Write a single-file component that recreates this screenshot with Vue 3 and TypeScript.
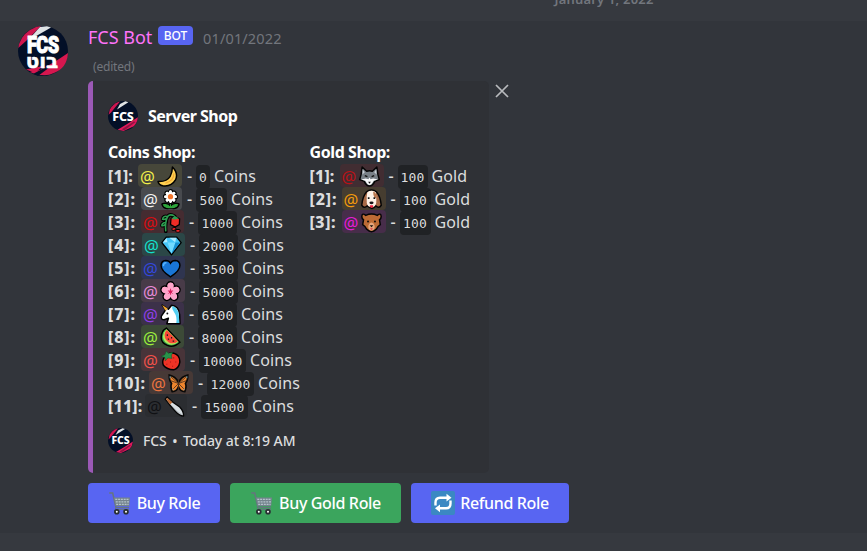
<script setup lang="ts">
interface ShopRow {
  n: number
  emoji: string
  color: string
  bg: string
  price: string
  labelW: number
  mentionW: number
  codeW: number
}

const coins: ShopRow[] = [
  { n: 1, emoji: 'moon', color: '#f1ee4b', bg: '#47473a', price: '0', labelW: 30, mentionW: 44, codeW: 14 },
  { n: 2, emoji: 'flower', color: '#f2f2f2', bg: '#484a4e', price: '500', labelW: 33, mentionW: 41, codeW: 31 },
  { n: 3, emoji: 'rose', color: '#d80d12', bg: '#452c31', price: '1000', labelW: 33, mentionW: 43, codeW: 39 },
  { n: 4, emoji: 'gem', color: '#14e0cd', bg: '#2b4747', price: '2000', labelW: 34, mentionW: 43, codeW: 39 },
  { n: 5, emoji: 'heart', color: '#3448dc', bg: '#2f3550', price: '3500', labelW: 33, mentionW: 44, codeW: 39 },
  { n: 6, emoji: 'blossom', color: '#e58ad8', bg: '#483b48', price: '5000', labelW: 33, mentionW: 44, codeW: 39 },
  { n: 7, emoji: 'unicorn', color: '#8f3fe8', bg: '#3c3149', price: '6500', labelW: 33, mentionW: 43, codeW: 39 },
  { n: 8, emoji: 'melon', color: '#9cef3e', bg: '#3c4a37', price: '8000', labelW: 33, mentionW: 43, codeW: 39 },
  { n: 9, emoji: 'berry', color: '#f0524b', bg: '#483439', price: '10000', labelW: 33, mentionW: 44, codeW: 47 },
  { n: 10, emoji: 'butterfly', color: '#ea7440', bg: '#473936', price: '12000', labelW: 41, mentionW: 44, codeW: 47 },
  { n: 11, emoji: 'knife', color: '#101114', bg: '#2b2d31', price: '15000', labelW: 37, mentionW: 42, codeW: 47 },
]
const gold: ShopRow[] = [
  { n: 1, emoji: 'wolf', color: '#ba1217', bg: '#412d32', price: '100', labelW: 30, mentionW: 44, codeW: 30 },
  { n: 2, emoji: 'dog', color: '#f39b0c', bg: '#463d30', price: '100', labelW: 32, mentionW: 44, codeW: 31 },
  { n: 3, emoji: 'bear', color: '#e61cd6', bg: '#472d4a', price: '100', labelW: 32, mentionW: 44, codeW: 31 },
]
const fields = [
  { id: 'coins', title: 'Coins Shop:', unit: 'Coins', rows: coins },
  { id: 'gold', title: 'Gold Shop:', unit: 'Gold', rows: gold },
]
const petals = [0, 45, 90, 135, 180, 225, 270, 315]
const blossomPetals = [0, 72, 144, 216, 288]
</script>

<template>
  <div class="chat">
    <svg class="defs" width="0" height="0" aria-hidden="true">
      <symbol id="crest" viewBox="0 0 50 50">
        <circle cx="25" cy="25" r="25" fill="#030f27" />
        <path d="M1 18 Q5 6 18 1 L23 0 L8 15 L.3 22Z" fill="#cf164f" />
        <path d="M22 1 L29 .3 L33 1.5 L20 9 L12 12Z" fill="#dfe3e5" />
        <path d="M50 27 Q49 42 36 47 Q26 52 12 46 L22 44 L38 35Z" fill="#d6174f" />
        <path d="M8 43.5 L25 40 L17 47Z" fill="#d6174f" />
        <path d="M15 48 L28 41 L32 41 L20 50Z" fill="#071329" />
      </symbol>
      <symbol id="crest-small" viewBox="0 0 50 50">
        <circle cx="25" cy="25" r="25" fill="#030f27" />
        <path d="M3 14 Q8 5 17 1.5 L20 1 L5 19 L1 23Z" fill="#cf164f" />
        <path d="M20 5 L29 .3 L34 2 L15 14Z" fill="#dfe3e5" />
        <path d="M49.8 27 Q49 36 43 42 L26 50 L16 48 L36 36Z" fill="#e0185a" />
        <path d="M23 47 L43 34 L46 35 L27 49Z" fill="#8d1541" />
      </symbol>
      <symbol id="cart" viewBox="0 0 24 24">
        <path d="M1.2 2 H4.7 L8 16.4 H21" fill="none" stroke="#66757f" stroke-width="1.5" />
        <path d="M5.8 6.4 H22 L21.2 15 H7.5Z" fill="#74838d" />
        <path d="M7.3 8.3 H21.3 M7.8 10.8 H21 M8.2 13.3 H20.6" stroke="#b4c3cb" stroke-width="1.3" stroke-dasharray="2 .8" />
        <path d="M8 16.4 Q6.6 18.4 8.4 18.4 H21" fill="none" stroke="#66757f" />
        <circle cx="8.8" cy="20.7" r="1.9" fill="#fff" stroke="#292f33" stroke-width="1.8" />
        <circle cx="18" cy="20.7" r="1.9" fill="#fff" stroke="#292f33" stroke-width="1.8" />
      </symbol>
      <symbol id="repeat" viewBox="0 0 24 24">
        <rect width="24" height="24" rx="2" fill="#3b88c3" />
        <path d="M4.5 14.5 V11.5 Q4.5 6.7 9 6.7 H17 M19.5 9.5 V12.5 Q19.5 17.3 15 17.3 H8" fill="none" stroke="#fff" stroke-width="2.4" />
        <path d="M15.5 2.8 L20.5 6.7 L15.5 10.6Z M9 13.4 L4 17.3 L9 21.2Z" fill="#fff" />
      </symbol>
      <symbol id="moon" viewBox="0 0 20 20">
        <path d="M14.7 1 Q20.6 7 17.6 13.2 Q13.5 20 5.5 18.8 Q1.6 18 1 14.8 Q9.5 15.2 12.5 10 Q14.6 6.4 14.7 1Z" fill="#ffd052" stroke="#000" stroke-width="1.4" stroke-linejoin="round" />
        <path d="M16 7 Q16.6 13.5 8 16.5" fill="none" stroke="#f0a832" stroke-width="1.1" />
      </symbol>
      <symbol id="flower" viewBox="0 0 20 20">
        <path d="M10 12 V18 M10 17.6 Q4 19 2.5 14.5 Q7 13 10 17.6 Q13 13 17.5 14.5 Q16 19 10 17.6" fill="#2ea63d" stroke="#000" stroke-width="2.6" stroke-linejoin="round" />
        <path d="M10 12 V18 M10 17.6 Q5 18.3 3.3 15 Q7 14 10 17.6 Q13 14 16.7 15 Q15 18.3 10 17.6" fill="#2ea63d" stroke="#2ea63d" />
        <ellipse v-for="a in petals" :key="a" cx="10" cy="3.3" rx="2.1" ry="2.6" fill="#fff" stroke="#000" stroke-width="1.2" :transform="`rotate(${a} 10 7.3)`" />
        <ellipse v-for="a in petals" :key="`inner${a}`" cx="10" cy="3.8" rx="1.6" ry="2.6" fill="#fff" :transform="`rotate(${a} 10 7.3)`" />
        <circle cx="10" cy="7.3" r="2.5" fill="#f4762c" />
      </symbol>
      <symbol id="rose" viewBox="0 0 20 20">
        <path d="M5.5 18.5 Q4.6 9 7.5 4 Q9.5 1.5 14 4 M6 9.5 Q1.5 10.5 1.8 13 Q4 13.5 5.6 11 M7.5 4.5 Q3 3 2.5 7 Q5 7.5 7.5 5" fill="none" stroke="#000" stroke-width="3.4" stroke-linejoin="round" stroke-linecap="round" />
        <path d="M5.5 18.5 Q4.6 9 7.5 4 Q9.5 1.5 14 4 M6 9.5 Q1.5 10.5 1.8 13 Q4 13.5 5.6 11 M7.5 4.5 Q3 3 2.5 7 Q5 7.5 7.5 5" fill="none" stroke="#2d9c50" stroke-width="1.5" />
        <path d="M10.5 6 L14 4 L18.7 6.5 L18.4 12 L14.5 14.3 L10 12Z" fill="#f02c26" stroke="#000" stroke-width="1.2" />
        <path d="M11 6.4 L14 3.5 L18 6.2 L14 7.2Z" fill="#2d9c50" />
        <path d="M12.5 16.3 L14 16 M16.2 17.9 H18" stroke="#000" stroke-width="3.2" stroke-linecap="round" />
        <path d="M12.5 16.3 L14 16 M16.2 17.9 H18" stroke="#e8262a" stroke-width="1.6" stroke-linecap="round" />
      </symbol>
      <symbol id="gem" viewBox="0 0 20 20">
        <path d="M5 2 H15 L19.2 7.2 L10 18.8 L.8 7.2Z" fill="#43c5f6" stroke="#000" stroke-width="1.3" stroke-linejoin="round" />
        <path d="M5.3 2.8 L6.2 7 L1.8 7.1Z M8 2.7 H14.6 L13.5 7Z" fill="#abeafe" />
        <path d="M6.2 7.2 H13.8 L10 18Z" fill="#71dbff" />
        <path d="M13.8 7.2 H18.2 L10 18Z" fill="#168fd0" />
      </symbol>
      <symbol id="heart" viewBox="0 0 20 20">
        <path d="M10 18 Q1 12.5 1 7 Q1.2 2.5 5.4 2.3 Q8.5 2.3 10 5 Q11.5 2.3 14.6 2.3 Q18.8 2.5 19 7 Q19 12.5 10 18Z" fill="#1976d6" stroke="#000" stroke-width="1.4" />
        <path d="M3.3 7 Q3.5 4.7 5.6 4.5" fill="none" stroke="#58b5ff" stroke-width="1.5" stroke-linecap="round" />
      </symbol>
      <symbol id="blossom" viewBox="0 0 20 20">
        <ellipse v-for="a in blossomPetals" :key="a" cx="10" cy="4.8" rx="3.7" ry="4" fill="#ffa8cb" stroke="#000" stroke-width="1.4" :transform="`rotate(${a} 10 10.2)`" />
        <ellipse v-for="a in blossomPetals" :key="`inner${a}`" cx="10" cy="5.5" rx="3" ry="3.9" fill="#ffa5ca" :transform="`rotate(${a} 10 10.2)`" />
        <path d="M10 7.4 V13 M7.6 9.2 L12.4 11.8 M12.4 9.2 L7.6 11.8" stroke="#e52768" />
        <circle cx="10" cy="10.3" r="1.5" fill="#d91856" />
      </symbol>
      <symbol id="unicorn" viewBox="0 0 20 20">
        <path d="M2 1 L8 5 L11 1.2 Q18 2 18.7 10 L19 18.8 H6.5 L8 13.5 L4 15 Q.6 15 1.3 11.5 L5.4 5.5Z" fill="#fff" stroke="#000" stroke-width="1.4" stroke-linejoin="round" />
        <path d="M2 1 L7.3 4.4 L5.3 6.4Z" fill="#f8aa2e" />
        <path d="M11.5 2 Q17.2 3 18 11 L18.4 18 H15.5 Q16.5 12 13.6 8 Q11 5 11.5 2Z" fill="#54cff2" />
        <circle cx="7" cy="9" r=".9" fill="#111" />
      </symbol>
      <symbol id="melon" viewBox="0 0 20 20">
        <path d="M6 1 L19 14.5 Q13 20 7 17.5 Q-1.2 14 2 5.5 Q3 2.5 6 1Z" fill="#35a849" stroke="#000" stroke-width="1.4" stroke-linejoin="round" />
        <path d="M6.2 2.2 L17.6 14 Q12.5 18.5 7.5 16 Q.7 12.4 3.8 5Z" fill="#b8e45c" />
        <path d="M6.5 2.8 L17 13.7 Q12.8 16.8 8.5 14.7 Q2.7 11 5 4.8Z" fill="#fa4838" />
        <path d="M7 7 V8.5 M7.5 11 L8.5 12 M11 9.5 V11 M12 13.5 H13.5" stroke="#1b1b1b" stroke-width="1.1" />
      </symbol>
      <symbol id="berry" viewBox="0 0 20 20">
        <path d="M3.5 8 Q7 2.5 13 3 Q19.4 5 18.8 12 Q17.8 17.5 13 18.9 Q6.5 18.5 3.2 14.5 Q1.8 11 3.5 8Z" fill="#ef3326" stroke="#000" stroke-width="1.4" />
        <path d="M1 6 L4.5 4.6 L6 1.2 L8 3 L12 2.2 L10.8 5.6 L11.5 8 L7.5 7.6 L5 10.3 L4.6 7.2Z" fill="#28924a" stroke="#0b4b24" stroke-width=".4" />
        <path d="M13 7 V8 M10 11 V12 M15 11 V12 M6.5 13 V14 M12 15 V16" stroke="#ad1515" />
      </symbol>
      <symbol id="butterfly" viewBox="0 0 20 20">
        <path d="M10 9 Q7 3 1.2 2 Q1 7 3.4 10 Q2 13 4 17.7 Q8.5 17.5 10 13 Q11.5 17.5 16 17.7 Q18 13 16.6 10 Q19 7 18.8 2 Q13 3 10 9Z" fill="#ee852d" stroke="#090909" stroke-width="1.6" />
        <path d="M10 6 V16 M10 10 L3 4 M10 10 L2.8 7.4 M10 10 L5 15 M10 10 L17 4 M10 10 L17.2 7.4 M10 10 L15 15" stroke="#48301f" stroke-width=".8" />
        <path d="M2 3 V5 M18 3 V5 M4.5 15 L5 16.4 M15.5 15 L15 16.4" stroke="#72b9d5" stroke-width=".8" />
      </symbol>
      <symbol id="knife" viewBox="0 0 20 20">
        <path d="M3 .9 L8.5 6 L15 10.5 Q19 15 18.6 19 Q15 19 11 14.7 L5.5 8.5 L1.2 3Z" fill="#d8dee2" stroke="#050505" stroke-width="1.3" stroke-linejoin="round" />
        <path d="M3 1.6 L8 6 L5.8 8 L2 3Z" fill="#b66735" />
        <path d="M7.3 9.2 Q12 15.5 17.5 18" stroke="#aab3b9" stroke-width=".7" fill="none" />
      </symbol>
      <symbol id="wolf" viewBox="0 0 20 20">
        <path d="M3 1 L7.3 5 Q10 4.2 12.7 5 L17 1 L18 8 L19.3 13 L15 14.6 Q13 19 10 19 Q7 19 5 14.6 L.7 13 L2 8Z" fill="#788087" stroke="#050505" stroke-width="1.4" stroke-linejoin="round" />
        <path d="M3.5 3 L5.5 6 L3.3 8Z M16.5 3 L14.5 6 L16.7 8Z" fill="#c7ced4" />
        <path d="M2 12.8 L6.5 12 L9 12.5 L10 11 L11 12.5 L13.5 12 L18 12.8 L14 14 Q12 18 10 18 Q8 18 6 14Z" fill="#f8f9fa" />
        <path d="M5.5 9.2 L8 10.2 M14.5 9.2 L12 10.2" stroke="#111" stroke-width="1.3" />
        <path d="M8.7 15 H11.3 L10 16.8Z" fill="#111" />
      </symbol>
      <symbol id="dog" viewBox="0 0 20 20">
        <path d="M5 3 Q10 -1 15 3 Q18.5 7 19.3 15.5 Q17 19 14 16 Q11 21 6 16 Q3 19 .7 15.5 Q1.5 7 5 3Z" fill="#a66946" stroke="#050505" stroke-width="1.4" />
        <path d="M6 3 Q10 .5 14 3 Q15 7 14.5 13 Q14 17 10 17 Q6 17 5.5 13 Q5 7 6 3Z" fill="#fff3e8" />
        <path d="M11.5 2.3 Q15 3 15 9 Q11.8 9 11.5 2.3Z" fill="#bb7950" />
        <path d="M7.3 7.8 V9.5 M12.7 7.8 V9.5" stroke="#111" stroke-width="1.6" />
        <ellipse cx="10" cy="13.2" rx="2" ry="1.3" fill="#171315" />
        <path d="M8.5 15.5 H11.5 V17 Q10 19 8.5 17Z" fill="#ed2443" />
      </symbol>
      <symbol id="bear" viewBox="0 0 20 20">
        <path d="M4.5 3.2 Q1 .5 .8 4 Q.6 6 2.4 7.5 L1.6 12 Q4 13.5 5.5 16.5 Q10 21 14.5 16.5 Q16 13.5 18.4 12 L17.6 7.5 Q19.4 6 19.2 4 Q19 .5 15.5 3.2 Q10 .7 4.5 3.2Z" fill="#bd6b35" stroke="#050505" stroke-width="1.4" />
        <path d="M7 13 Q8 10 10 10 Q12 10 13 13 Q13.5 17.5 10 17.5 Q6.5 17.5 7 13Z" fill="#e7a77d" />
        <circle cx="6.7" cy="9" r="1" fill="#16100d" />
        <circle cx="13.3" cy="9" r="1" fill="#16100d" />
        <path d="M8.3 12.5 H11.7 L10 14.5Z" fill="#16100d" />
        <path d="M8.5 16 Q10 15 11.5 16 L10 17Z" fill="#de2941" />
      </symbol>
    </svg>

    <div class="divider"><span>January 1, 2022</span></div>

    <article class="message">
      <div class="avatar">
        <svg viewBox="0 0 50 50"><use href="#crest" /></svg>
        <span class="avatar-top">FCS</span>
        <span class="avatar-bottom">בוט</span>
      </div>
      <div class="body">
        <header class="head">
          <span class="name">FCS Bot</span>
          <span class="tag">BOT</span>
          <time>01/01/2022</time>
        </header>
        <div class="edited">(edited)</div>

        <div class="embed-line">
          <section class="embed">
            <div class="author">
              <div class="logo">
                <svg viewBox="0 0 50 50"><use href="#crest-small" /></svg>
                <span>FCS</span>
              </div>
              <strong>Server Shop</strong>
            </div>
            <div class="fields">
              <div v-for="f in fields" :key="f.id" :class="['field', f.id]">
                <h3>{{ f.title }}</h3>
                <div v-for="r in f.rows" :key="r.n" class="row">
                  <b :style="{ width: r.labelW + 'px' }">[{{ r.n }}]:</b>
                  <span class="mention" :style="{ color: r.color, background: r.bg, width: r.mentionW + 'px' }">
                    <i>@</i>
                    <svg viewBox="0 0 20 20"><use :href="'#' + r.emoji" /></svg>
                  </span>
                  <span class="dash">-</span>
                  <code :style="{ width: r.codeW + 'px' }">{{ r.price }}</code>
                  <span class="unit">{{ f.unit }}</span>
                </div>
              </div>
            </div>
            <footer>
              <div class="logo small">
                <svg viewBox="0 0 50 50"><use href="#crest-small" /></svg>
                <span>FCS</span>
              </div>
              <span class="foot">FCS <em>•</em> Today at 8:19 AM</span>
            </footer>
          </section>
          <svg class="close" viewBox="0 0 14 14"><path d="M1 1 L13 13 M13 1 L1 13" /></svg>
        </div>

        <div class="buttons">
          <button class="buy"><svg viewBox="0 0 24 24"><use href="#cart" /></svg><span>Buy Role</span></button>
          <button class="gold-buy"><svg viewBox="0 0 24 24"><use href="#cart" /></svg><span>Buy Gold Role</span></button>
          <button class="refund"><svg viewBox="0 0 24 24"><use href="#repeat" /></svg><span>Refund Role</span></button>
        </div>
      </div>
    </article>
  </div>
</template>

<style>
body {
  margin: 0;
  background: #36393f;
}
</style>

<style scoped>
.chat {
  width: 867px;
  height: 551px;
  overflow: hidden;
  box-sizing: border-box;
  background: #36393f;
  color: #dcddde;
  font: 16px/23px "Noto Sans", "Open Sans", sans-serif;
  white-space: nowrap;
}
.defs { position: absolute; }
.divider {
  height: 21px;
  padding-left: 341px;
  display: flex;
  justify-content: center;
  color: #72767d;
  font-size: 13px;
  font-weight: 600;
  line-height: 16px;
  letter-spacing: .2px;
}
.divider span { margin-top: -9px; }
.message {
  height: 512px;
  display: flex;
  background: #32353b;
}
.avatar {
  width: 50px;
  height: 50px;
  margin: 5px 20px 0 18px;
  flex: none;
  display: grid;
  place-items: center;
  color: #fff;
  font-weight: 900;
}
.avatar > * { grid-area: 1 / 1; }
.avatar svg { width: 50px; height: 50px; }
.avatar span { z-index: 1; line-height: 18px; }
.avatar-top {
  font-family: "Roboto", sans-serif;
  font-size: 24px;
  letter-spacing: -.8px;
  margin: 0 1px 12px 0;
  transform: scaleX(.76);
  -webkit-text-stroke: 1px #fff;
}
.avatar-bottom {
  font-family: "DejaVu Sans", sans-serif;
  font-size: 20px;
  margin: 19px 2px 0 0;
  -webkit-text-stroke: .5px #fff;
}
.body { flex: 1; }
.head {
  height: 34px;
  display: flex;
  align-items: center;
}
.name {
  width: 70px;
  margin-top: -1px;
  color: #ff73fa;
  font-size: 18px;
}
.tag {
  width: 35px;
  height: 19px;
  margin-top: -5px;
  border-radius: 4px;
  background: #5865f2;
  color: #fff;
  font-size: 12px;
  font-weight: 500;
  line-height: 19px;
  text-align: center;
}
time {
  margin: 1px 0 0 10px;
  color: #72767d;
  font-size: 14.5px;
  letter-spacing: .15px;
}
.edited {
  height: 26px;
  padding-left: 5px;
  color: #72767d;
  font-size: 12px;
  line-height: 23px;
  letter-spacing: -.2px;
}
.embed-line { display: flex; }
.embed {
  width: 401px;
  height: 392px;
  box-sizing: border-box;
  padding: 20px 0 0 15px;
  border-left: 5px solid #9b59b6;
  border-radius: 5px;
  background: #2f3136;
}
.author {
  height: 30px;
  display: flex;
  align-items: center;
  gap: 10px;
  color: #fff;
}
.author strong { font-size: 16px; font-weight: 700; letter-spacing: -.5px; }
.logo {
  width: 30px;
  height: 30px;
  display: grid;
  place-items: center;
  color: #fff;
  font: 800 12.5px/15px "Noto Sans", sans-serif;
}
.logo > * { grid-area: 1 / 1; }
.logo svg { width: 100%; height: 100%; }
.logo span { z-index: 1; letter-spacing: -.2px; }
.logo.small { width: 25px; height: 25px; font-size: 10.5px; }
.fields {
  display: flex;
  padding-top: 10px;
}
.coins { width: 201.5px; }
h3 {
  margin: 0;
  color: #fff;
  font-size: 16px;
  font-weight: 700;
  line-height: 23px;
  letter-spacing: -.4px;
}
.row {
  height: 23px;
  display: flex;
  align-items: flex-start;
}
.row b { font-weight: 800; letter-spacing: .9px; line-height: 25px; }
.row:nth-child(2) b { letter-spacing: .2px; }
.row:last-child b { letter-spacing: .2px; }
.gold .row:last-child b { letter-spacing: .6px; }
.mention {
  height: 23px;
  display: flex;
  align-items: flex-start;
  border-radius: 4px;
  box-sizing: border-box;
  padding-left: 2px;
}
.mention i { width: 17px; font-style: normal; font-size: 16.5px; line-height: 25px; letter-spacing: -1px; flex: none; }
.mention svg { width: 21px; height: 21px; margin-top: 2px; flex: none; }
.dash {
  width: 14px;
  padding-left: 1px;
  box-sizing: border-box;
  text-align: center;
  line-height: 25px;
  font-weight: 500;
}
code {
  height: 24px;
  margin-top: 1px;
  border-radius: 4px;
  background: #202225;
  font: 13px/25px "DejaVu Sans Mono", monospace;
  letter-spacing: .17px;
  text-align: center;
}
.unit { margin-left: 4px; line-height: 25px; letter-spacing: .1px; }
footer {
  margin-top: 11px;
  display: flex;
  align-items: center;
  gap: 10px;
}
.foot { font-size: 14px; font-weight: 500; letter-spacing: -.08px; }
.foot em { margin: 0 2px; font-style: normal; }
.close {
  width: 14px;
  height: 14px;
  margin: 3px 0 0 6px;
  stroke: #b9bbbe;
  stroke-width: 1.7;
  fill: none;
}
.buttons {
  display: flex;
  gap: 10px;
  padding-top: 10px;
}
button {
  height: 40px;
  padding: 0;
  border: 0;
  border-radius: 4px;
  display: flex;
  align-items: center;
  justify-content: center;
  gap: 5px;
  background: #5865f2;
  color: #fff;
  font: 500 16px/23px "Noto Sans", sans-serif;
  letter-spacing: -.35px;
}
button svg { width: 24px; height: 24px; }
.buy { width: 132px; }
.gold-buy { width: 171px; background: #3ba55d; }
.refund { width: 158px; }
</style>
